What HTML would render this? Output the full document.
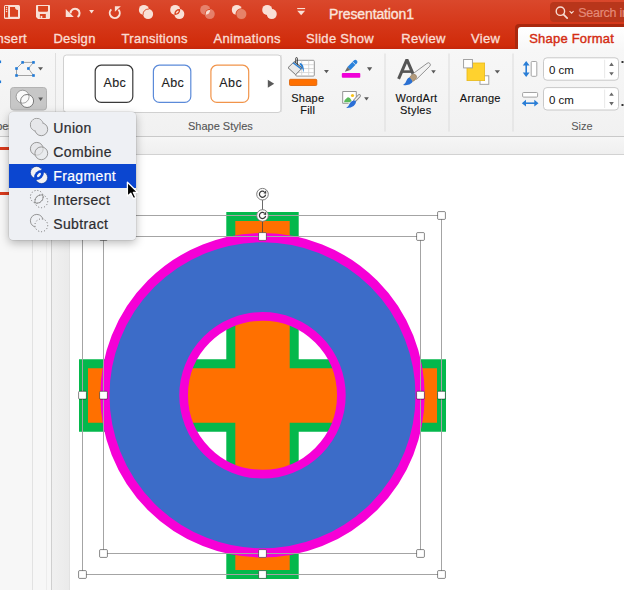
<!DOCTYPE html>
<html><head><meta charset="utf-8"><style>
html,body{margin:0;padding:0;}
body{width:624px;height:590px;overflow:hidden;position:relative;background:#fff;font-family:"Liberation Sans",sans-serif;}
.a{position:absolute;}
.t{position:absolute;white-space:nowrap;}
svg{position:absolute;overflow:visible;}
</style></head><body>
<div class="a" style="left:0;top:0;width:624px;height:49px;background:linear-gradient(#da482c,#d6391b 45%,#d02b0a 92%,#c4260a);"></div>
<div class="a" style="left:550px;top:2px;width:90px;height:19.5px;border-radius:4px;background:#b8361b;"></div>
<div class="t" style="left:578.2px;top:6.62px;font-size:12.5px;line-height:12.5px;color:#e48a78;letter-spacing:-0.25px;-webkit-text-stroke:0.2px #e48a78;">Search in PowerPoint</div>
<svg style="left:0;top:0" width="624" height="30" viewBox="0 0 624 30"><circle cx="560.4" cy="11.2" r="4.2" fill="none" stroke="#f7dcd3" stroke-width="1.4"/><path d="M563.4 14.3 L567.2 18.1" stroke="#f7dcd3" stroke-width="1.7" stroke-linecap="round"/><path d="M569.6 11.2 L571.6 13.2 L573.6 11.2" fill="none" stroke="#f7dcd3" stroke-width="1.1"/></svg><div class="t" style="left:329px;top:6.55px;font-size:14px;line-height:14px;color:#fbe4dc;letter-spacing:-0.12px;-webkit-text-stroke:0.35px #fbe4dc;">Presentation1</div>
<div class="t" style="left:-7.4px;top:32.00px;font-size:13px;line-height:13px;color:#fadcd2;letter-spacing:0.3px;-webkit-text-stroke:0.35px #fadcd2;">Insert</div>
<div class="t" style="left:53.4px;top:32.00px;font-size:13px;line-height:13px;color:#fadcd2;letter-spacing:0.3px;-webkit-text-stroke:0.35px #fadcd2;">Design</div>
<div class="t" style="left:121.5px;top:32.00px;font-size:13px;line-height:13px;color:#fadcd2;letter-spacing:0.3px;-webkit-text-stroke:0.35px #fadcd2;">Transitions</div>
<div class="t" style="left:213.5px;top:32.00px;font-size:13px;line-height:13px;color:#fadcd2;letter-spacing:0.3px;-webkit-text-stroke:0.35px #fadcd2;">Animations</div>
<div class="t" style="left:306px;top:32.00px;font-size:13px;line-height:13px;color:#fadcd2;letter-spacing:0.3px;-webkit-text-stroke:0.35px #fadcd2;">Slide Show</div>
<div class="t" style="left:401.25px;top:32.00px;font-size:13px;line-height:13px;color:#fadcd2;letter-spacing:0.3px;-webkit-text-stroke:0.35px #fadcd2;">Review</div>
<div class="t" style="left:471px;top:32.00px;font-size:13px;line-height:13px;color:#fadcd2;letter-spacing:0.3px;-webkit-text-stroke:0.35px #fadcd2;">View</div>
<div class="a" style="left:515px;top:24.2px;width:120px;height:24.5px;background:#a9280e;border-radius:4px 0 0 0;"></div>
<div class="a" style="left:518px;top:26.8px;width:120px;height:23px;background:linear-gradient(#ffffff,#f7f7f7);border-radius:3px 0 0 0;"></div>
<div class="t" style="left:529.25px;top:32.00px;font-size:13px;line-height:13px;color:#d42c12;letter-spacing:0.2px;-webkit-text-stroke:0.4px #d42c12;">Shape Format</div>
<div class="a" style="left:0;top:49px;width:624px;height:87px;background:linear-gradient(#f7f7f7,#f1f1f1);"></div>
<div class="a" style="left:0;top:136px;width:624px;height:1px;background:#c9c9c9;"></div>
<div class="a" style="left:51px;top:137px;width:573px;height:17px;background:linear-gradient(#f6f6f6,#efefef);"></div>
<div class="a" style="left:51px;top:154px;width:573px;height:1px;background:#d2d2d2;"></div>
<div class="a" style="left:0;top:137px;width:51px;height:453px;background:#f7f7f7;"></div>
<div class="a" style="left:32px;top:137px;width:1px;height:453px;background:#e2e2e2;"></div>
<div class="a" style="left:46px;top:137px;width:1px;height:453px;background:#ececec;"></div>
<div class="a" style="left:51px;top:137px;width:1px;height:453px;background:#cfcfcf;"></div>
<div class="a" style="left:52px;top:155px;width:18px;height:435px;background:linear-gradient(90deg,#f0f0f0,#eaeaea);"></div>
<div class="a" style="left:69px;top:155px;width:1px;height:435px;background:#e2e2e2;"></div>
<div class="a" style="left:0;top:147px;width:12px;height:3px;background:#d83a1c;"></div>
<div class="a" style="left:0;top:192px;width:12px;height:3px;background:#d83a1c;"></div>
<svg style="left:0;top:0" width="624" height="30" viewBox="0 0 624 30"><rect x="4" y="5" width="16" height="14" rx="1.5" fill="#f9e0d6"/><rect x="5" y="6" width="3.1" height="11.5" fill="#d9431f"/><circle cx="6.55" cy="7.6" r="0.75" fill="#f9e0d6"/><circle cx="6.55" cy="9.5" r="0.75" fill="#f9e0d6"/><circle cx="6.55" cy="11.4" r="0.75" fill="#f9e0d6"/><path d="M10 7 H18 V16.8 H10 Z" fill="#d9431f"/><path d="M15 7 H18 V10 A3 3 0 0 1 15 7 Z" fill="#f9e0d6"/><path d="M36.8 5.1 H49.2 A0.8 0.8 0 0 1 50 5.9 V18.1 A0.8 0.8 0 0 1 49.2 18.9 H38 L36 16.9 V5.9 A0.8 0.8 0 0 1 36.8 5.1 Z" fill="#f9e0d6"/><path d="M38.1 6 H48 V10.6 A1.2 1.2 0 0 1 46.8 11.8 H39.3 A1.2 1.2 0 0 1 38.1 10.6 Z" fill="#d9431f"/><rect x="39.9" y="14" width="5.9" height="4" fill="#d9431f"/><rect x="40.6" y="15.9" width="1.7" height="2.1" fill="#f9e0d6"/><path d="M65.75 8.9 L65.75 17 L73.8 17 Z" fill="#f9e0d6"/><path d="M70.6 13.4 A4.5 4.5 0 1 1 77.6 17.0" fill="none" stroke="#f9e0d6" stroke-width="2"/><path d="M89.1 10 H94 L91.55 13.5 Z" fill="#f9e0d6"/><path d="M111.3 9.4 A5 5 0 1 0 118.4 9.6" fill="none" stroke="#f9e0d6" stroke-width="2"/><path d="M114.9 6.2 H120.9 L114.9 11.8 Z" fill="#f9e0d6"/><defs><clipPath id="cc1"><circle cx="143.9" cy="9.9" r="5.0"/></clipPath><clipPath id="fc1"><circle cx="175.2" cy="9.9" r="5.0"/></clipPath><clipPath id="ic1"><circle cx="205.2" cy="9.9" r="5.0"/></clipPath><clipPath id="sc2"><circle cx="241.4" cy="14.1" r="5.9"/></clipPath></defs><circle cx="143.9" cy="9.9" r="5.0" fill="#f9e0d6" fill-opacity="1"/><circle cx="148.1" cy="14.1" r="5.0" fill="#f9e0d6" fill-opacity="1"/><circle cx="148.1" cy="14.1" r="5.0" fill="none" stroke="#d9431f" stroke-width="0.9" clip-path="url(#cc1)"/><circle cx="175.2" cy="9.9" r="5.0" fill="#f9e0d6" fill-opacity="1"/><circle cx="179.3" cy="14.1" r="5.0" fill="#f9e0d6" fill-opacity="1"/><circle cx="179.3" cy="14.1" r="5.0" fill="#d9431f" clip-path="url(#fc1)"/><ellipse cx="177.25" cy="12" rx="1.9" ry="0.85" transform="rotate(-45 177.25 12)" fill="#f9e0d6"/><circle cx="205.2" cy="9.9" r="5.0" fill="#f9e0d6" fill-opacity="0.4"/><circle cx="209.75" cy="14.1" r="5.0" fill="#f9e0d6" fill-opacity="0.4"/><circle cx="209.75" cy="14.1" r="5.0" fill="#d9431f" clip-path="url(#ic1)"/><circle cx="209.75" cy="14.1" r="4.1" fill="#f9e0d6" clip-path="url(#ic1)"/><circle cx="236.8" cy="9.9" r="5.0" fill="#f9e0d6" fill-opacity="1"/><circle cx="241.4" cy="14.1" r="5.9" fill="#d9431f"/><circle cx="241.4" cy="14.1" r="5.0" fill="#f9e0d6" fill-opacity="0.4"/><circle cx="267.2" cy="9.9" r="5.0" fill="#f9e0d6" fill-opacity="1"/><circle cx="271.75" cy="14.1" r="5.0" fill="#f9e0d6" fill-opacity="1"/><rect x="297.2" y="8" width="7.9" height="1.1" fill="#f9e0d6"/><path d="M297.2 10.8 H305.1 L301.15 15.3 Z" fill="#f9e0d6"/></svg>
<svg style="left:0;top:0" width="624" height="140" viewBox="0 0 624 140"><rect x="-1.5" y="60.5" width="2.6" height="2.6" fill="#1f7ad8"/><rect x="-1.5" y="80.5" width="2.6" height="2.6" fill="#1f7ad8"/><path d="M22.6 62.4 H33.5 L28.4 68.5 L33.5 75.5 H16.5 V68.5 Z" fill="none" stroke="#9a9a9a" stroke-width="0.9"/><rect x="21.3" y="61.1" width="2.6" height="2.6" fill="#1f7ad8"/><rect x="32.2" y="61.1" width="2.6" height="2.6" fill="#1f7ad8"/><rect x="27.099999999999998" y="67.2" width="2.6" height="2.6" fill="#1f7ad8"/><rect x="32.2" y="74.2" width="2.6" height="2.6" fill="#1f7ad8"/><rect x="15.2" y="74.2" width="2.6" height="2.6" fill="#1f7ad8"/><rect x="15.2" y="67.2" width="2.6" height="2.6" fill="#1f7ad8"/><path d="M38 67.2 H43 L40.5 70.4 Z" fill="#5a5a5a"/><rect x="10.5" y="87.5" width="36" height="22.5" rx="3" fill="#c7c7c7" stroke="#b3b3b3" stroke-width="1"/><circle cx="22.6" cy="96.7" r="6.5" fill="#fafafa"/><circle cx="27.1" cy="101" r="6.5" fill="#fafafa"/><circle cx="22.6" cy="96.7" r="6.5" fill="none" stroke="#8a8a8a" stroke-width="0.8"/><circle cx="27.1" cy="101" r="6.5" fill="none" stroke="#6e6e6e" stroke-width="0.9"/><path d="M38.2 97.4 H43 L40.6 101 Z" fill="#5a5a5a"/><rect x="55" y="53" width="1" height="79" fill="#dedede"/><rect x="63.5" y="55" width="217.5" height="57.5" rx="3" fill="#ffffff" stroke="#d0d0d0" stroke-width="1"/><rect x="95.2" y="65.2" width="37.6" height="37.2" rx="6" fill="#fff" stroke="#3a3a3a" stroke-width="1.2"/><rect x="153.4" y="65.2" width="37.4" height="37.2" rx="6" fill="#fff" stroke="#5b8ad9" stroke-width="1.2"/><rect x="210.9" y="65.2" width="37.8" height="37.2" rx="6" fill="#fff" stroke="#f1944a" stroke-width="1.2"/><path d="M267.8 79.8 L274.2 83.8 L267.8 87.8 Z" fill="#5a5a5a"/><rect x="280.5" y="55" width="1" height="57" fill="#d5d5d5"/></svg>
<div class="t" style="left:103.5px;top:77.22px;font-size:12.5px;line-height:12.5px;color:#222;letter-spacing:0.4px;-webkit-text-stroke:0.12px #222;">Abc</div>
<div class="t" style="left:161.5px;top:77.22px;font-size:12.5px;line-height:12.5px;color:#222;letter-spacing:0.4px;-webkit-text-stroke:0.12px #222;">Abc</div>
<div class="t" style="left:219.3px;top:77.22px;font-size:12.5px;line-height:12.5px;color:#222;letter-spacing:0.4px;-webkit-text-stroke:0.12px #222;">Abc</div>
<div class="t" style="left:188px;top:120.59px;font-size:11px;line-height:11px;color:#555;-webkit-text-stroke:0.1px #555;">Shape Styles</div>
<div class="t" style="left:-54px;top:120.59px;font-size:11px;line-height:11px;color:#555;-webkit-text-stroke:0.2px #555;">Insert Shapes</div>
<svg style="left:0;top:0" width="624" height="140" viewBox="0 0 624 140"><rect x="295.8" y="60.3" width="18.5" height="15.8" rx="1" fill="#fff" stroke="#8c8c8c" stroke-width="0.9"/><path d="M301.7 60.5 V76 M308.7 60.5 V76 M296 64.7 H314 M296 68.6 H314 M296 72.6 H314" stroke="#cfcfcf" stroke-width="0.8"/><path d="M288 67.7 L294.2 61.7 L302.3 68 L295.6 74.7 Z" fill="#e9e9e9" stroke="#666" stroke-width="0.9"/><path d="M292.6 63.3 L293.6 62.3 L301.9 68.4 L300.9 69.4 Z" fill="#2a80d6"/><path d="M294.2 61.7 L302.3 68" stroke="#666" stroke-width="0.9"/><path d="M295.7 62.8 V58.4 A0.85 0.85 0 0 1 297.4 58.4 V64.8" fill="none" stroke="#222" stroke-width="0.8"/><path d="M299.6 62.8 Q304.8 63.8 303.5 72.4 Q302.6 67.4 299.9 64.6 Z" fill="#2a80d6"/><rect x="289.5" y="79.3" width="27.3" height="6.2" rx="1" fill="#ff7000" stroke="#d95e00" stroke-width="0.8"/><path d="M324 70 H328.9 L326.45 73.2 Z" fill="#5a5a5a"/><path d="M347.4 67 L353.8 60.6 A2.1 2.1 0 0 1 356.8 63.6 L350.4 70 Z" fill="#2a82dc"/><path d="M347.4 67 L350.4 70 L344.8 71.8 Z" fill="#6a6a6a"/><path d="M352.6 61.8 L355.6 64.8" stroke="#f4f4f4" stroke-width="0.8"/><rect x="341.8" y="73" width="18.5" height="4.7" rx="1" fill="#f000d8"/><path d="M367 67.3 H372.2 L369.6 70.9 Z" fill="#5a5a5a"/><rect x="342.7" y="91.5" width="13.6" height="11.8" fill="#fff"/><path d="M348.6 103.3 H342.7 V91.5 H356.3 V97.2" fill="none" stroke="#8a8a8a" stroke-width="0.9"/><path d="M344 102.2 Q344.6 99.2 347.4 97.4 Q349.6 96.6 351.6 100.4 L350.2 102.2 Z" fill="#5cba5c"/><circle cx="352.5" cy="95.5" r="1.6" fill="#f7c21a"/><path d="M359.2 95.8 L354.6 100.8" stroke="#8a8a8a" stroke-width="3.4" stroke-linecap="round"/><path d="M359.2 95.8 L354.6 100.8" stroke="#f0f0f0" stroke-width="1.6" stroke-linecap="round"/><path d="M355.6 100.6 Q356.8 103.4 353.6 106 Q350.6 108.3 346.2 108 Q349 105.8 350 103 Q351.6 99.8 355.6 100.6 Z" fill="#2b6fd6"/><path d="M364.1 97.2 H368.9 L366.5 100.5 Z" fill="#5a5a5a"/><rect x="384.5" y="53.5" width="1" height="78" fill="#dcdcdc"/><rect x="448.5" y="53.5" width="1" height="78" fill="#dcdcdc"/><rect x="512.5" y="53.5" width="1" height="78" fill="#dcdcdc"/><path d="M398.6 78.8 L406.9 59.6 L415.2 78.8" fill="none" stroke="#555" stroke-width="3" stroke-linejoin="bevel"/><path d="M401.8 71.6 H412.4" stroke="#555" stroke-width="2.6"/><path d="M427 63.4 A1.9 1.9 0 0 1 429.8 66.2 L416.6 79.2 L411.8 74.6 Z" fill="#f2f2f2" stroke="#7a7a7a" stroke-width="0.8"/><ellipse cx="413" cy="77.8" rx="4" ry="3" transform="rotate(-45 413 77.8)" fill="#b39b7d" stroke="#8d7658" stroke-width="0.5"/><path d="M409.6 77.6 Q412.8 80.6 412.2 82.6 Q409.2 86 403 85 Q406 83 407 79.6 Q408 77.8 409.6 77.6 Z" fill="#2a70d2"/><path d="M431.2 70.2 H435.8 L433.5 73.6 Z" fill="#5a5a5a"/><rect x="480" y="75.8" width="8.8" height="8.5" fill="#fff" stroke="#9a9a9a" stroke-width="0.9"/><rect x="467" y="63" width="17.6" height="17.6" fill="#ffd22e" stroke="#e8b818" stroke-width="0.8"/><rect x="463.6" y="59.5" width="8.8" height="8.4" fill="#fff" stroke="#9a9a9a" stroke-width="0.9"/><path d="M494.7 70.3 H500 L497.35 73.6 Z" fill="#5a5a5a"/><path d="M526.2 62.5 V75.5" stroke="#2a7ed6" stroke-width="1.6"/><path d="M522.8 65.5 L526.2 61 L529.6 65.5 Z M522.8 72.5 L526.2 77 L529.6 72.5 Z" fill="#2a7ed6"/><rect x="531.2" y="61.5" width="5.6" height="14.8" rx="1" fill="#fff" stroke="#9a9a9a" stroke-width="0.9"/><rect x="522.6" y="92.5" width="15" height="4.6" rx="1" fill="#fff" stroke="#9a9a9a" stroke-width="0.9"/><path d="M524.5 103.2 H535.8" stroke="#2a7ed6" stroke-width="1.6"/><path d="M526 99.8 L521.8 103.2 L526 106.6 Z M534.3 99.8 L538.5 103.2 L534.3 106.6 Z" fill="#2a7ed6"/><rect x="543.5" y="57.8" width="75" height="22.4" rx="3.5" fill="#fff" stroke="#c3c3c3" stroke-width="0.9"/><rect x="604.3" y="59.8" width="0.8" height="18.4" fill="#e3e3e3"/><path d="M609.2 66.0 L611.5 62.599999999999994 L613.8 66.0 Z M609.2 72.2 L611.5 75.6 L613.8 72.2 Z" fill="#6a6a6a"/><rect x="543.5" y="87.6" width="75" height="22.4" rx="3.5" fill="#fff" stroke="#c3c3c3" stroke-width="0.9"/><rect x="604.3" y="89.6" width="0.8" height="18.4" fill="#e3e3e3"/><path d="M609.2 95.8 L611.5 92.39999999999999 L613.8 95.8 Z M609.2 102.0 L611.5 105.39999999999999 L613.8 102.0 Z" fill="#6a6a6a"/><rect x="621.5" y="61" width="2" height="2" fill="#333"/><rect x="621.5" y="104" width="2" height="2" fill="#333"/></svg>
<div class="t" style="left:291.2px;top:93.09px;font-size:11px;line-height:11px;color:#111;letter-spacing:0.25px;-webkit-text-stroke:0.12px #111;">Shape</div>
<div class="t" style="left:300.2px;top:104.89px;font-size:11px;line-height:11px;color:#111;letter-spacing:0.25px;-webkit-text-stroke:0.12px #111;">Fill</div>
<div class="t" style="left:395.5px;top:93.09px;font-size:11px;line-height:11px;color:#111;letter-spacing:0.25px;-webkit-text-stroke:0.12px #111;">WordArt</div>
<div class="t" style="left:400px;top:105.29px;font-size:11px;line-height:11px;color:#111;letter-spacing:0.25px;-webkit-text-stroke:0.12px #111;">Styles</div>
<div class="t" style="left:459.8px;top:93.09px;font-size:11px;line-height:11px;color:#111;letter-spacing:0.25px;-webkit-text-stroke:0.12px #111;">Arrange</div>
<div class="t" style="left:549px;top:64.87px;font-size:11.5px;line-height:11.5px;color:#111;">0 cm</div>
<div class="t" style="left:549px;top:95.07px;font-size:11.5px;line-height:11.5px;color:#111;">0 cm</div>
<div class="t" style="left:571.2px;top:120.59px;font-size:11px;line-height:11px;color:#555;">Size</div>
<svg style="left:0;top:0" width="624" height="590" viewBox="0 0 624 590"><path d="M230.8 216.5 H294.2 V363.8 H441.5 V427.2 H294.2 V574.5 H230.8 V427.2 H83.5 V363.8 H230.8 Z" fill="#ff7000" stroke="#04b84c" stroke-width="9" stroke-linejoin="miter"/><path d="M104.9 395.3 A157.6 157.6 0 1 0 420.1 395.3 A157.6 157.6 0 1 0 104.9 395.3 Z M183.65 395.3 A78.85 78.85 0 1 0 341.35 395.3 A78.85 78.85 0 1 0 183.65 395.3 Z" fill="#3c6cc8" fill-rule="evenodd"/><circle cx="262.5" cy="395.3" r="157.6" fill="none" stroke="#f600d6" stroke-width="9.2"/><circle cx="262.5" cy="395.3" r="78.85" fill="none" stroke="#f600d6" stroke-width="8.7"/><rect x="82.5" y="215.5" width="359.0" height="359.0" fill="none" stroke="#a4a4a4" stroke-width="1"/><path d="M262.5 194.2 V215.5" stroke="#444" stroke-width="0.8"/><rect x="103.5" y="236.5" width="317.0" height="317.0" fill="none" stroke="#a4a4a4" stroke-width="1"/><path d="M262.5 215.5 V236.5" stroke="#444" stroke-width="0.8"/><rect x="78.6" y="211.6" width="7.8" height="7.8" rx="1" fill="#fff" stroke="rgba(0,0,0,0.47)" stroke-width="1"/><rect x="258.6" y="211.6" width="7.8" height="7.8" rx="1" fill="#fff" stroke="rgba(0,0,0,0.47)" stroke-width="1"/><rect x="437.6" y="211.6" width="7.8" height="7.8" rx="1" fill="#fff" stroke="rgba(0,0,0,0.47)" stroke-width="1"/><rect x="78.6" y="391.3" width="7.8" height="7.8" rx="1" fill="#fff" stroke="rgba(0,0,0,0.47)" stroke-width="1"/><rect x="437.6" y="391.3" width="7.8" height="7.8" rx="1" fill="#fff" stroke="rgba(0,0,0,0.47)" stroke-width="1"/><rect x="78.6" y="570.6" width="7.8" height="7.8" rx="1" fill="#fff" stroke="rgba(0,0,0,0.47)" stroke-width="1"/><rect x="258.6" y="570.6" width="7.8" height="7.8" rx="1" fill="#fff" stroke="rgba(0,0,0,0.47)" stroke-width="1"/><rect x="437.6" y="570.6" width="7.8" height="7.8" rx="1" fill="#fff" stroke="rgba(0,0,0,0.47)" stroke-width="1"/><rect x="99.6" y="232.6" width="7.8" height="7.8" rx="1" fill="#fff" stroke="rgba(0,0,0,0.47)" stroke-width="1"/><rect x="258.6" y="232.6" width="7.8" height="7.8" rx="1" fill="#fff" stroke="rgba(0,0,0,0.47)" stroke-width="1"/><rect x="416.6" y="232.6" width="7.8" height="7.8" rx="1" fill="#fff" stroke="rgba(0,0,0,0.47)" stroke-width="1"/><rect x="99.6" y="391.3" width="7.8" height="7.8" rx="1" fill="#fff" stroke="rgba(0,0,0,0.47)" stroke-width="1"/><rect x="416.6" y="391.3" width="7.8" height="7.8" rx="1" fill="#fff" stroke="rgba(0,0,0,0.47)" stroke-width="1"/><rect x="99.6" y="549.6" width="7.8" height="7.8" rx="1" fill="#fff" stroke="rgba(0,0,0,0.47)" stroke-width="1"/><rect x="258.6" y="549.6" width="7.8" height="7.8" rx="1" fill="#fff" stroke="rgba(0,0,0,0.47)" stroke-width="1"/><rect x="416.6" y="549.6" width="7.8" height="7.8" rx="1" fill="#fff" stroke="rgba(0,0,0,0.47)" stroke-width="1"/><circle cx="262.5" cy="194.2" r="5.8" fill="#fff" stroke="#7d7d7d" stroke-width="1"/><path d="M264.4 191.7 A3.1 3.1 0 1 0 265.6 194.6" fill="none" stroke="#3a3a3a" stroke-width="1.25"/><path d="M263.4 193.2 L266.2 190.29999999999998 L266.2 193.7 Z" fill="#3a3a3a"/><circle cx="262.5" cy="215.5" r="5.8" fill="#fff" stroke="#7d7d7d" stroke-width="1"/><path d="M264.4 213.0 A3.1 3.1 0 1 0 265.6 215.9" fill="none" stroke="#3a3a3a" stroke-width="1.25"/><path d="M263.4 214.5 L266.2 211.6 L266.2 215.0 Z" fill="#3a3a3a"/></svg>
<div class="a" style="left:9px;top:111.8px;width:127px;height:128px;border-radius:4px;background:#eef0f4;box-shadow:0 3px 10px rgba(0,0,0,0.28),0 0 0 0.5px rgba(0,0,0,0.12);"></div>
<div class="a" style="left:9px;top:164px;width:127px;height:24px;background:#0b46d0;"></div>
<div class="t" style="left:53.3px;top:120.95px;font-size:14px;line-height:14px;color:#2c2c30;letter-spacing:0.35px;-webkit-text-stroke:0.22px #2c2c30;">Union</div>
<div class="t" style="left:53.3px;top:144.95px;font-size:14px;line-height:14px;color:#2c2c30;letter-spacing:0.35px;-webkit-text-stroke:0.22px #2c2c30;">Combine</div>
<div class="t" style="left:53.3px;top:168.95px;font-size:14px;line-height:14px;color:#fff;letter-spacing:0.35px;-webkit-text-stroke:0.22px #fff;">Fragment</div>
<div class="t" style="left:53.3px;top:192.95px;font-size:14px;line-height:14px;color:#2c2c30;letter-spacing:0.35px;-webkit-text-stroke:0.22px #2c2c30;">Intersect</div>
<div class="t" style="left:53.3px;top:216.95px;font-size:14px;line-height:14px;color:#2c2c30;letter-spacing:0.35px;-webkit-text-stroke:0.22px #2c2c30;">Subtract</div>
<svg style="left:0;top:0" width="200" height="260" viewBox="0 0 200 260"><defs><clipPath id="u1"><rect x="0" y="0" width="200" height="260"/></clipPath></defs><circle cx="36.8" cy="124.8" r="6.4" fill="#e6e7ea" stroke="#8d8d8d" stroke-width="0.9"/><circle cx="41.3" cy="129.3" r="6.4" fill="#e6e7ea" stroke="#8d8d8d" stroke-width="0.9"/><circle cx="36.8" cy="124.8" r="5.95" fill="#e6e7ea"/><circle cx="36.8" cy="148.8" r="6.4" fill="#e6e7ea" stroke="#8d8d8d" stroke-width="0.9"/><circle cx="41.3" cy="153.3" r="6.4" fill="#e6e7ea" fill-opacity="0.6" stroke="#8d8d8d" stroke-width="0.9"/><defs><mask id="fm1" maskUnits="userSpaceOnUse" x="0" y="0" width="200" height="260"><rect x="0" y="0" width="200" height="260" fill="#fff"/><circle cx="41.5" cy="177.5" r="7.4" fill="#000"/></mask><mask id="fm2" maskUnits="userSpaceOnUse" x="0" y="0" width="200" height="260"><rect x="0" y="0" width="200" height="260" fill="#fff"/><circle cx="36.5" cy="172.5" r="7.4" fill="#000"/></mask></defs><circle cx="36.5" cy="172.5" r="6.1" fill="#f2f2f4" stroke="#0a2f8c" stroke-width="0.6" mask="url(#fm1)"/><circle cx="41.5" cy="177.5" r="6.1" fill="#f2f2f4" stroke="#0a2f8c" stroke-width="0.6" mask="url(#fm2)"/><ellipse cx="39" cy="175" rx="2.6" ry="1.25" transform="rotate(-45 39 175)" fill="#f2f2f4"/><defs><clipPath id="in1"><circle cx="36.8" cy="196.8" r="6.4"/></clipPath><clipPath id="in2"><circle cx="41.3" cy="201.3" r="6.4"/></clipPath></defs><circle cx="36.8" cy="196.8" r="6.4" fill="none" stroke="#6e6e6e" stroke-width="1" stroke-dasharray="1 2"/><circle cx="41.3" cy="201.3" r="6.4" fill="none" stroke="#6e6e6e" stroke-width="1" stroke-dasharray="1 2"/><circle cx="41.3" cy="201.3" r="6.4" fill="none" stroke="#8a8a8a" stroke-width="0.9" clip-path="url(#in1)"/><circle cx="36.8" cy="196.8" r="6.4" fill="none" stroke="#8a8a8a" stroke-width="0.9" clip-path="url(#in2)"/><defs><clipPath id="sb1"><path d="M0 0 H200 V260 H0 Z M41.3 225.3 m-6.4 0 a6.4 6.4 0 1 0 12.8 0 a6.4 6.4 0 1 0 -12.8 0 Z" clip-rule="evenodd"/></clipPath></defs><circle cx="36.8" cy="220.8" r="6.4" fill="none" stroke="#8a8a8a" stroke-width="0.9" clip-path="url(#sb1)"/><circle cx="41.3" cy="225.3" r="6.4" fill="none" stroke="#6e6e6e" stroke-width="1" stroke-dasharray="1 2"/></svg>
<svg style="left:0;top:0" width="200" height="220" viewBox="0 0 200 220"><path d="M127.4 182.2 V196.2 L130.8 193.2 L133.4 198.6 L135.8 197.6 L133.4 192.4 L137.6 192.3 Z" fill="#000" stroke="#fff" stroke-width="1.3" stroke-linejoin="round"/></svg>
</body></html>
